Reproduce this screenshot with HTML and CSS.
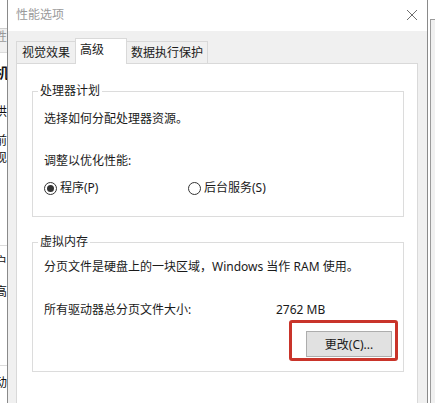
FILE: index.html
```html
<!DOCTYPE html>
<html lang="zh-CN">
<head>
  <meta charset="UTF-8" />
  <title>性能选项</title>
  <link rel="stylesheet" href="styles.css">
</head>
<body>
  <div class="desktop">
    <!-- windows behind the dialog -->
    <div class="back-win back-left">
      <div class="bl-title"></div>
      <div class="bl-band"><span class="bl-cap">性</span></div>
      <div class="bl-row bl-strong r-ji">机</div>
      <div class="bl-row r-gong">拱</div>
      <div class="bl-row r-qian">前</div>
      <div class="bl-row r-xian">现</div>
      <div class="bl-rule r-rule1"></div>
      <div class="bl-row r-hu">户</div>
      <div class="bl-row r-gao">高</div>
      <div class="bl-rule r-rule2"></div>
      <div class="bl-row r-dong">动</div>
    </div>
    <div class="back-win back-right"></div>

    <div class="dialog">
      <div class="titlebar">
        <span class="title">性能选项</span>
        <svg class="close" width="12" height="12" viewBox="0 0 12 12">
          <path d="M1 1 L11 11 M11 1 L1 11" stroke="#6e6e6e" stroke-width="1" fill="none"/>
        </svg>
      </div>

      <div class="dlg-body">
        <div class="tabs">
          <div class="tab tab-visual">视觉效果</div>
          <div class="tab tab-adv active">高级</div>
          <div class="tab tab-dep">数据执行保护</div>
        </div>

        <div class="panel">
          <fieldset class="group group-cpu">
            <legend>处理器计划</legend>
            <p class="g-line first">选择如何分配处理器资源。</p>
            <p class="g-line second">调整以优化性能:</p>
            <div class="radios">
              <label class="radio-item radio-first"><span class="radio checked"></span>程序(P)</label>
              <label class="radio-item"><span class="radio"></span>后台服务(S)</label>
            </div>
          </fieldset>

          <fieldset class="group group-vm">
            <legend>虚拟内存</legend>
            <p class="g-line vm-first">分页文件是硬盘上的一块区域，Windows 当作 RAM 使用。</p>
            <div class="size-row">
              <span class="size-label">所有驱动器总分页文件大小:</span>
              <span class="size-value">2762 MB</span>
            </div>
            <div class="btn-row">
              <div class="btn-wrap">
                <span class="hilite"></span>
                <button class="btn" type="button">更改(C)...</button>
              </div>
            </div>
          </fieldset>
        </div>
      </div>
    </div>
  </div>
</body>
</html>
```

FILE: styles.css
```css
* { box-sizing: border-box; }
html, body { margin: 0; padding: 0; }
body {
  font-family: "Noto Sans", "Noto Sans CJK SC", sans-serif;
  font-size: 12px;
  color: #1a1a1a;
  background: #fff;
}
.desktop {
  position: relative;
  width: 435px;
  height: 403px;
  overflow: hidden;
  background: #fff;
}

/* background windows */
.back-win { position: absolute; }
.back-left {
  left: -60px;
  top: 0;
  width: 80px;
  height: 403px;
  background: #fff;
  padding-left: 0;
}
.bl-title {
  height: 29px;
  border-bottom: 1px solid #cfcfcf;
}
.bl-band {
  height: 24px;
  background: #f0f0f0;
  border-bottom: 1px solid #dcdcdc;
  padding-left: 55px;
  line-height: 16px;
  padding-top: 0;
}
.bl-cap { color: #9a9a9a; font-size: 12px; }
.bl-row {
  padding-left: 55px;
  line-height: 16px;
  height: 16px;
  color: #111;
}
.bl-strong { font-size: 14px; font-weight: bold; }
.bl-rule { height: 1px; background: #dcdcdc; }
.r-ji { margin-top: 12px; }
.r-gong { margin-top: 23px; }
.r-qian { margin-top: 13px; }
.r-xian { margin-top: 1px; }
.r-rule1 { margin-top: 79px; }
.r-hu { margin-top: 8px; }
.r-gao { margin-top: 14px; }
.r-rule2 { margin-top: 65px; }
.r-dong { margin-top: 9px; }

.back-right {
  left: 430px;
  top: 19px;
  width: 40px;
  height: 400px;
  background: #f0f0f0;
  border: 1px solid #9a9a9a;
}

/* dialog */
.dialog {
  position: absolute;
  left: 7px;
  top: -1px;
  width: 421px;
  height: 430px;
  border: 1px solid #8a8a8a;
  background: #f0f0f0;
  z-index: 2;
}
.titlebar {
  height: 31px;
  background: #fff;
  display: flex;
  align-items: center;
  justify-content: space-between;
  padding: 0 9px 0 8px;
}
.title {
  color: #9a9a9a;
  line-height: 30px;
  margin-top: -1px;
}
.close { margin-top: -1px; }

.dlg-body {
  padding: 7px 9px 0 8px;
}
.tabs {
  display: flex;
  align-items: flex-end;
  height: 26px;
  position: relative;
  z-index: 1;
}
.tab {
  border: 1px solid #d9d9d9;
  border-bottom: none;
  background: #f0f0f0;
  line-height: 16px;
  height: 22px;
  margin-bottom: 1px;
  padding-top: 3px;
  text-align: center;
  white-space: nowrap;
}
.tab-visual { width: 60px; }
.tab-adv { width: 52px; margin-left: -1px; }
.tab-dep { width: 82px; margin-left: -1px; }
.tab.active {
  background: #fff;
  height: 26px;
  margin-bottom: 0;
  padding-top: 3px;
  text-align: left;
  padding-left: 4px;
  position: relative;
  z-index: 2;
}

.panel {
  margin-top: -1px;
  background: #fff;
  border: 1px solid #d9d9d9;
  height: 360px;
  padding: 20px 13px 0 15px;
}

.group {
  margin: 0;
  border: 1px solid #dcdcdc;
  padding: 0 11px 20px 11px;
  min-width: 0;
}
.group legend {
  margin-left: -6px;
  padding: 0 2px;
  line-height: 14px;
  font-size: 12px;
}
.group-vm {
  margin-top: 18px;
  padding-bottom: 14px;
}
.g-line {
  margin: 0;
  line-height: 16px;
}
.g-line.first { margin-top: 13px; }
.g-line.second { margin-top: 26px; }
.g-line.vm-first { margin-top: 10px; }

.radios {
  display: flex;
  margin-top: 11px;
  line-height: 16px;
}
.radio-item {
  display: flex;
  align-items: center;
  gap: 3px;
}
.radio-first { width: 144px; }
.radio {
  width: 13px;
  height: 13px;
  border: 1px solid #333;
  border-radius: 50%;
  display: inline-flex;
  align-items: center;
  justify-content: center;
}
.radio.checked::after {
  content: "";
  width: 7px;
  height: 7px;
  border-radius: 50%;
  background: #333;
}

.size-row {
  display: flex;
  margin-top: 27px;
  line-height: 16px;
}
.size-label { width: 232px; }

.btn-row {
  display: flex;
  justify-content: flex-end;
  margin-top: 13px;
}
.btn-wrap { position: relative; }
.btn {
  width: 86px;
  height: 26px;
  background: #e1e1e1;
  border: 1px solid #adadad;
  font-family: inherit;
  font-size: 12px;
  color: #1a1a1a;
  padding: 0;
  display: block;
}
.hilite {
  position: absolute;
  left: -17px;
  top: -11px;
  right: -6px;
  bottom: -4px;
  border: 3px solid #c9342a;
  border-radius: 3px;
}
```
